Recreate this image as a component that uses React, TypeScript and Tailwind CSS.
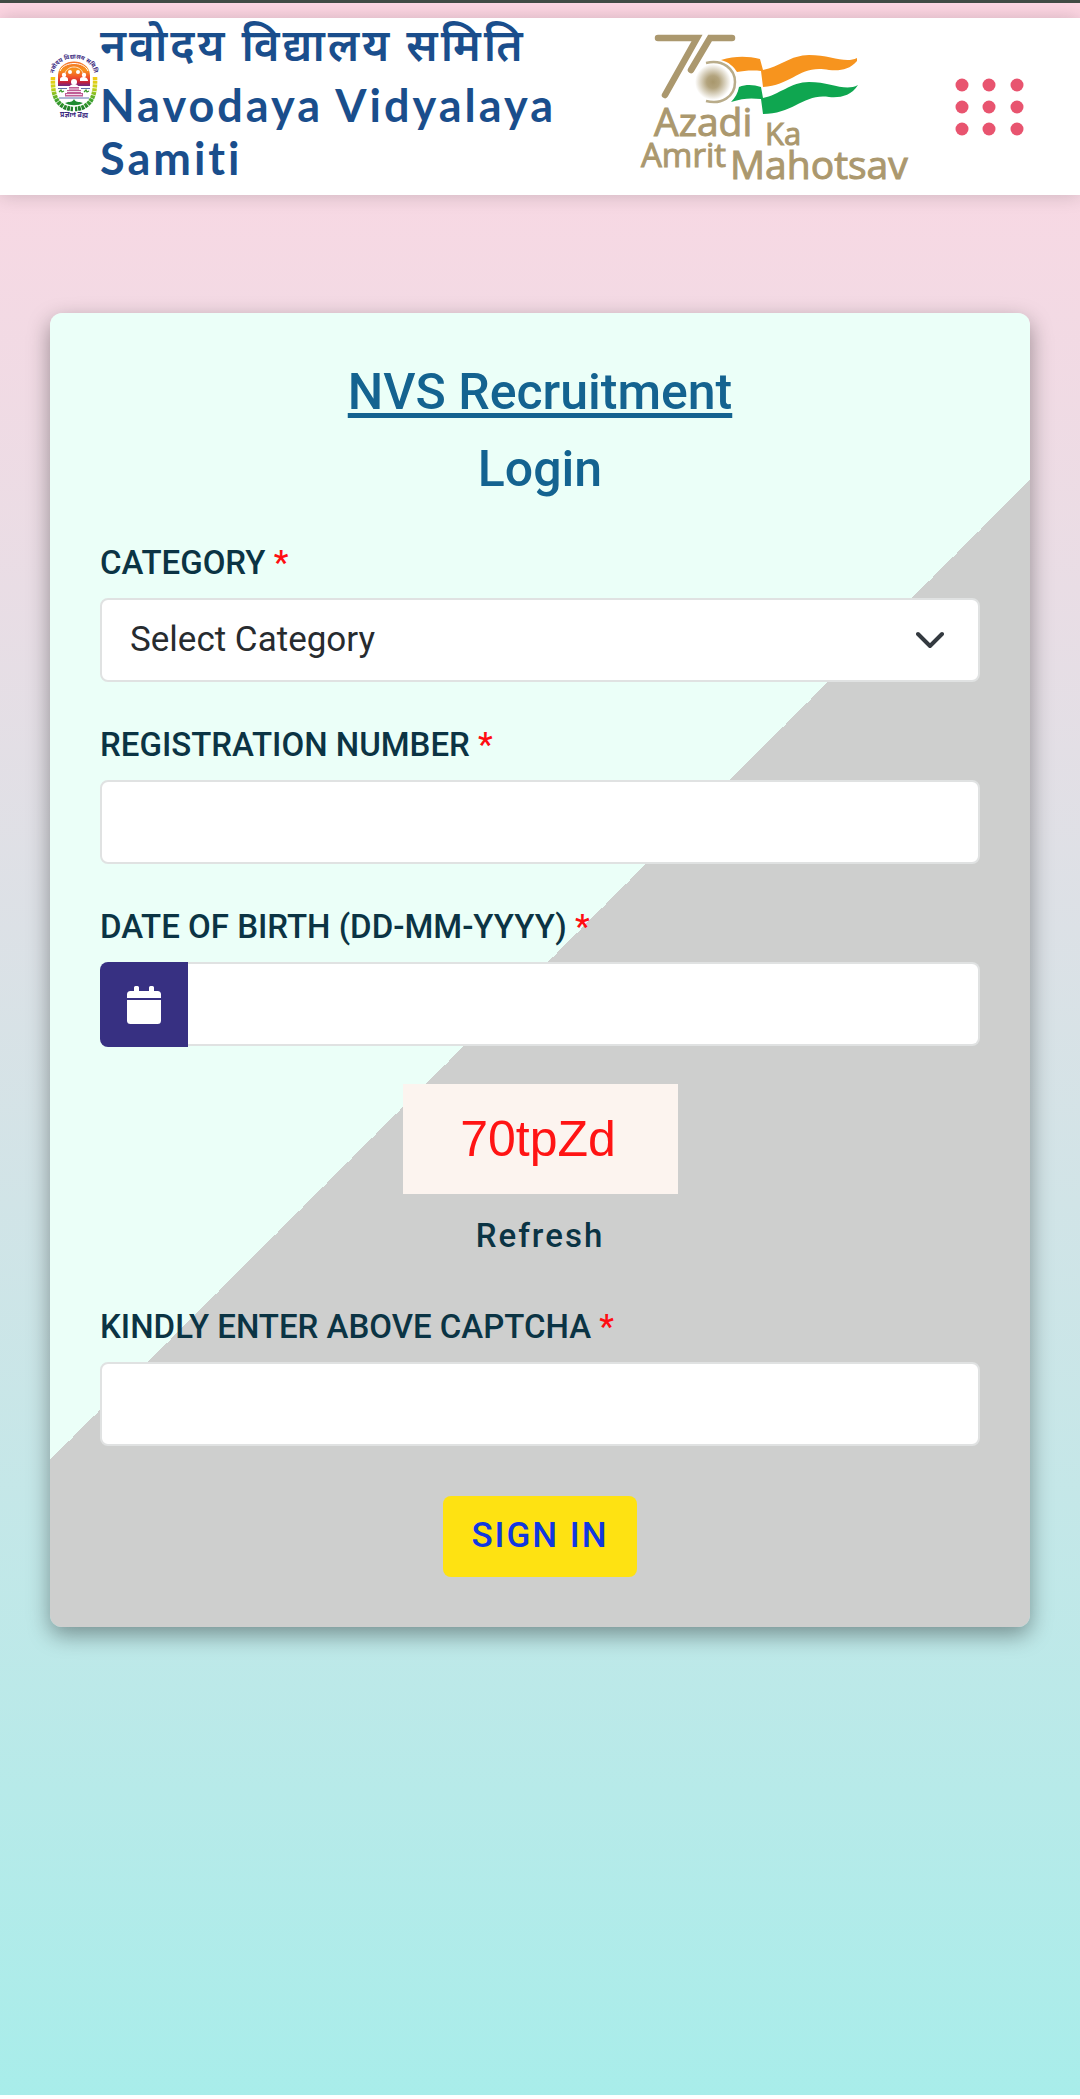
import React from "react";

const roboto = "font-[Roboto,'Liberation_Sans',sans-serif]";

function Emblem() {
  return (
    <svg viewBox="0 0 48 66" className="h-[66px] w-12 shrink-0 overflow-visible" role="img" aria-label="Navodaya Vidyalaya Samiti emblem">
      <defs>
        <linearGradient id="sun" x1="0" y1="0" x2="0" y2="1">
          <stop offset="0" stopColor="#f4702a" />
          <stop offset="0.35" stopColor="#f7941d" />
          <stop offset="0.65" stopColor="#f0502a" />
          <stop offset="0.85" stopColor="#c4203c" />
          <stop offset="1" stopColor="#6b2a86" />
        </linearGradient>
        <linearGradient id="leaf" x1="0" y1="24" x2="0" y2="57" gradientUnits="userSpaceOnUse">
          <stop offset="0" stopColor="#f6c915" />
          <stop offset="0.35" stopColor="#c5d41c" />
          <stop offset="0.7" stopColor="#3fa52c" />
          <stop offset="1" stopColor="#1f7a2c" />
        </linearGradient>
        <path id="arc" d="M3.5 22 C6 0 42 0 44.5 22" />
      </defs>
      <text className="fill-[#3b2a80] font-['Noto_Sans',sans-serif] text-[6px] font-bold" textAnchor="middle">
        <textPath href="#arc" startOffset="50%">नवोदय विद्यालय समिति</textPath>
      </text>
      <path d="M8 33 V22 C9 4 39 4 40 22 V33 Z" fill="url(#sun)" />
      <path d="M10 18 C14 8 34 8 38 18" fill="none" stroke="#fff" strokeWidth="1" />
      <path d="M15 20 C18 12 30 12 33 20" fill="none" stroke="#fde3c8" strokeWidth="1" />
      <g fill="#fff">
        <circle cx="14" cy="22" r="2.2" />
        <circle cx="34" cy="22" r="2.2" />
        <circle cx="20" cy="19" r="2" />
        <circle cx="28" cy="19" r="2" />
        <path d="M10 28 V26 C10 23 18 23 18 26 V28 Z M30 28 V26 C30 23 38 23 38 28 Z" />
        <circle cx="24" cy="29" r="3" />
        <path d="M19 35 C19 30 29 30 29 35 Z" />
      </g>
      <path d="M8 35.5 H17 M31 35.5 H40 M9 45 H39" stroke="#4e62a5" strokeWidth="0.9" />
      <path d="M19 34 H29 V37 H31 V40 H33 V43.5 H15 V40 H17 V37 H19 Z" fill="#c05f96" />
      <path d="M19 36 H29 M17 38.5 H31 M16 41.5 H32" stroke="#fff" strokeWidth="0.8" />
      <path d="M9 39 l2 -2 1 2 2 -1 M34 39 l2 -2 1 2 2 -1" stroke="#3a9a2c" strokeWidth="1.2" fill="none" />
      <path d="M15 50 C20 48 22 50 24 46 C26 50 28 48 33 50 C28 53 20 53 15 50 Z" fill="#1f8a30" />
      <path d="M3 24 C2 46 9 55 23 56" fill="none" stroke="url(#leaf)" strokeWidth="4.5" strokeDasharray="3 0.7" />
      <path d="M45 24 C46 46 39 55 25 56" fill="none" stroke="url(#leaf)" strokeWidth="4.5" strokeDasharray="3 0.7" />
      <text x="24" y="64" textAnchor="middle" className="fill-[#3b2a80] font-['Noto_Sans',sans-serif] text-[7px] font-bold">
        प्रज्ञानं ब्रह्म
      </text>
    </svg>
  );
}

function AzadiLogo() {
  return (
    <svg viewBox="0 0 276 160" className="h-40 w-[276px] shrink-0 overflow-visible" role="img" aria-label="Azadi Ka Amrit Mahotsav">
      <defs>
        <radialGradient id="hub">
          <stop offset="0" stopColor="#a8976c" />
          <stop offset="0.35" stopColor="#b3a47e" />
          <stop offset="1" stopColor="#fff" />
        </radialGradient>
      </defs>
      <path
        d="M84 36 C98 32 110 32 123 35 L126 46 C142 43 154 31 172 31 C194 31 208 40 220 34 L220 37 C212 46 203 47 192 46 C163 40 156 61 126 63 L124 47 C115 46 106 47 100 48 C97 43 92 38 84 36 Z"
        fill="#f7941e"
      />
      <path
        d="M102 63 C110 60 117 61 124 63 L126 74 C142 71 154 58 172 58 C194 58 208 68 221 61 C214 72 203 74 192 73 C168 69 156 90 126 90 L124 75 C114 74 106 74 94 78 C98 74 101 69 102 63 Z"
        fill="#0fa650"
      />
      <g fill="none" stroke="#ab986e" strokeWidth="6.5" strokeLinecap="round">
        <path d="M21 14 H60 L28 71" />
        <path d="M95 14 H73 L54 46" />
      </g>
      <circle cx="76" cy="58" r="18" fill="url(#hub)" />
      <path d="M69 39 C86 35 98 45 98 58 C98 73 84 81 69 77" fill="none" stroke="#b9ac8a" strokeWidth="2.5" />
      <g className="fill-[#ab986e] font-['Open_Sans','Noto_Sans',sans-serif]" stroke="#ab986e" strokeWidth="1">
        <text x="17" y="112" className="text-[39px]">Azadi</text>
        <text x="128" y="121" className="text-[31px]">Ka</text>
        <text x="4" y="143" className="text-[33px]">Amrit</text>
        <text x="93" y="155" className="text-[39px]">Mahotsav</text>
      </g>
    </svg>
  );
}

function MenuDots() {
  return (
    <svg viewBox="0 0 70 60" className="h-[60px] w-[70px]" fill="#e8546f" aria-hidden="true">
      {[8, 30, 52].map((y) => [8, 35, 63].map((x) => <circle key={`${x}-${y}`} cx={x} cy={y} r="6.5" />))}
    </svg>
  );
}

function Field({ id, label, children }: { id: string; label: string; children: React.ReactNode }) {
  return (
    <div className="flex flex-col gap-[15px]">
      <label htmlFor={id} className="text-[33px] leading-10 font-medium text-[#0b3444]">
        {label} <span className="text-[#ff0d12]">*</span>
      </label>
      {children}
    </div>
  );
}

const box = "h-[84px] w-full rounded-lg border-2 border-[#e0e2e2] bg-white px-7 text-[35px] text-[#272b2f] outline-none";

export default function App() {
  return (
    <div
      className={`min-h-screen border-t-[3px] border-b-4 border-t-[#434b45] border-b-white bg-[#d3e2e7] bg-linear-to-b from-[#fed6e3] to-[#a8edea] ${roboto}`}
    >
      <header className="mt-[15px] flex min-h-[177px] items-center bg-white pr-[56px] pl-[50px] shadow-[0_0_18px_rgba(0,0,0,0.18)]">
        <div className="mb-[42px]">
          <Emblem />
        </div>
        <h1 className="ml-[2px] flex-1 self-stretch font-[Lato,'Noto_Sans',sans-serif] text-[45px] leading-[53px] font-bold tracking-[3px] text-[#1a4e8c]">
          <span className="block h-[61px] text-[44px] font-semibold" lang="hi">नवोदय विद्यालय समिति</span>
          Navodaya Vidyalaya Samiti
        </h1>
        <div className="mr-[41px] mb-[6px] shrink-0">
          <AzadiLogo />
        </div>
        <button type="button" aria-label="Open menu" className="cursor-pointer">
          <MenuDots />
        </button>
      </header>

      <main className="px-[50px] pt-[118px] pb-[100px]">
        <form
          className="flex flex-col rounded-xl bg-[linear-gradient(135deg,#ebfff8_50%,#cecfce_50%)] px-[50px] pt-[41px] pb-[50px] shadow-[0_8px_22px_rgba(0,0,0,0.38)]"
          onSubmit={(e) => e.preventDefault()}
        >
          <h2 className="text-center text-[50px] leading-[77px] font-medium text-[#146390]">
            <span className="underline decoration-[5px] underline-offset-4">NVS Recruitment</span>
            <br />
            Login
          </h2>

          <div className="mt-[35px] flex flex-col gap-[43px]">
            <Field id="category" label="CATEGORY">
              <div className="relative">
                <select id="category" className={`${box} appearance-none`}>
                  <option>Select Category</option>
                </select>
                <svg viewBox="0 0 28 18" className="pointer-events-none absolute top-[33px] right-9 h-[18px] w-7" aria-hidden="true">
                  <path d="M2 3 L14 15 L26 3" fill="none" stroke="#343a40" strokeWidth="4" strokeLinecap="round" strokeLinejoin="round" />
                </svg>
              </div>
            </Field>

            <Field id="registration" label="REGISTRATION NUMBER">
              <input id="registration" type="text" className={box} />
            </Field>

            <Field id="dob" label="DATE OF BIRTH (DD-MM-YYYY)">
              <div className="flex">
                <button type="button" aria-label="Pick a date" className="flex h-[85px] w-[88px] shrink-0 items-center justify-center rounded-l-lg bg-[#373082]">
                  <svg viewBox="0 0 34 38" className="h-[38px] w-[34px]" fill="#fff" aria-hidden="true">
                    <path d="M7 1.5 a1.5 1.5 0 0 1 1.5 -1.5 h2 a1.5 1.5 0 0 1 1.5 1.5 V5 H22 V1.5 a1.5 1.5 0 0 1 1.5 -1.5 h2 a1.5 1.5 0 0 1 1.5 1.5 V5 H30.5 a3.5 3.5 0 0 1 3.5 3.5 V12 H0 V8.5 A3.5 3.5 0 0 1 3.5 5 H7 Z" />
                    <path d="M0 14 H34 V34.5 a3.5 3.5 0 0 1 -3.5 3.5 H3.5 a3.5 3.5 0 0 1 -3.5 -3.5 Z" />
                  </svg>
                </button>
                <input id="dob" type="text" className="h-[84px] min-w-0 flex-1 rounded-r-lg border-2 border-l-0 border-[#e0e2e2] bg-white px-7 text-[35px] outline-none" />
              </div>
            </Field>
          </div>

          <div className="mt-[37px] flex flex-col items-center">
            <div className="flex h-[110px] w-[275px] items-center justify-center bg-[#fcf4ef] pr-1 font-['Liberation_Sans',sans-serif] text-[50px] text-[#ff1414]">
              70tpZd
            </div>
            <button type="button" className="mt-5 text-[33px] leading-[44px] font-medium tracking-[2px] text-[#0b3444]">
              Refresh
            </button>
          </div>

          <div className="mt-[49px]">
            <Field id="captcha" label="KINDLY ENTER ABOVE CAPTCHA">
              <input id="captcha" type="text" className={box} />
            </Field>
          </div>

          <button
            type="submit"
            className="mt-[50px] h-[81px] self-center rounded-lg bg-[#fee212] px-7 text-[35px] font-medium tracking-[2px] text-[#1138e0]"
          >
            SIGN IN
          </button>
        </form>
      </main>
    </div>
  );
}
